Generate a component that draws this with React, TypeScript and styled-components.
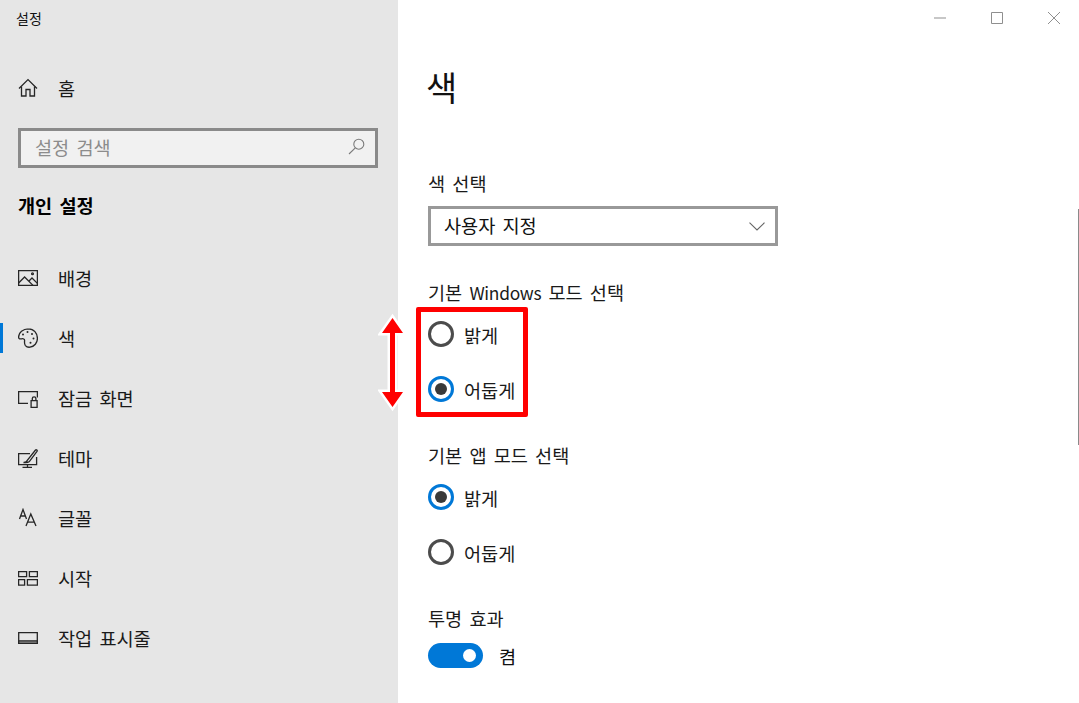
import React from "react";
import styled, { createGlobalStyle } from "styled-components";

const Global = createGlobalStyle`
  html, body { margin: 0; padding: 0; height: 100%; background: #fff; overflow: hidden; }
  body { font-family: "Noto Sans CJK KR", "Noto Sans", sans-serif; color: #111; word-spacing: 3px; }
  #root { height: 100%; }
`;

const Window = styled.div`
  position: relative;
  width: 1079px;
  height: 703px;
  display: flex;
  overflow: hidden;
  background: #fff;
`;

const Sidebar = styled.aside`
  width: 398px;
  flex: none;
  background: #e6e6e6;
  display: flex;
  flex-direction: column;
  padding: 0 20px 0 18px;
  box-sizing: border-box;
`;

const AppTitle = styled.div`
  font-size: 14px;
  line-height: 18px;
  margin: 9px 0 0 -2px;
  height: 18px;
`;

const HomeRow = styled.div`
  display: flex;
  align-items: center;
  height: 30px;
  margin-top: 46px;
  gap: 20px;
`;

const SearchBox = styled.div`
  box-sizing: border-box;
  height: 40px;
  width: 360px;
  margin-top: 25px;
  border: 3px solid #8a8a8a;
  background: #f1f1f1;
  display: flex;
  align-items: center;
  justify-content: space-between;
  padding: 0 10px 3px 14px;
  font-size: 18.6px;
  color: #8c8c8c;
`;

const SectionTitle = styled.div`
  font-size: 18.6px;
  font-weight: 700;
  line-height: 26px;
  margin-top: 24px;
  color: #000;
`;

const NavList = styled.nav`
  display: flex;
  flex-direction: column;
  margin-top: 30px;
`;

const NavItem = styled.div<{ $active?: boolean }>`
  position: relative;
  display: flex;
  align-items: center;
  height: 60px;
  gap: 20px;
  &::before {
    content: "";
    display: ${(p) => (p.$active ? "block" : "none")};
    position: absolute;
    left: -18px;
    top: 15px;
    width: 3px;
    height: 30px;
    background: #0078d7;
  }
`;

const IconSlot = styled.span`
  width: 20px;
  height: 20px;
  flex: none;
  display: block;
  svg { display: block; }
`;

const NavLabel = styled.span`
  font-size: 18.6px;
  line-height: 26px;
  color: #1a1a1a;
`;

const Main = styled.main`
  flex: 1;
  padding-left: 30px;
  display: flex;
  flex-direction: column;
`;

const PageTitle = styled.h1`
  font-size: 34px;
  font-weight: 400;
  line-height: 44px;
  margin: 65px 0 0 -2px;
  color: #111;
`;

const Label = styled.div<{ $top: number }>`
  font-size: 18.6px;
  line-height: 26px;
  margin-top: ${(p) => p.$top}px;
  color: #1a1a1a;
`;

const Latin = styled.span`
  font-size: 17.4px;
  letter-spacing: -0.3px;
`;

const Select = styled.div`
  box-sizing: border-box;
  width: 350px;
  height: 40px;
  margin-top: 10px;
  border: 3px solid #999;
  display: flex;
  align-items: center;
  justify-content: space-between;
  padding: 0 10px 0 13px;
  font-size: 18.6px;
`;

const SelectText = styled.span`
  margin-top: -3px;
`;

const RadioRow = styled.div<{ $top: number }>`
  display: flex;
  align-items: center;
  gap: 10px;
  height: 26px;
  margin-top: ${(p) => p.$top}px;
  font-size: 18.6px;
  color: #1a1a1a;
`;

const Radio = styled.span<{ $on?: boolean }>`
  box-sizing: border-box;
  width: 26px;
  height: 26px;
  border-radius: 50%;
  flex: none;
  border: 3px solid ${(p) => (p.$on ? "#0078d7" : "#4c4c4c")};
  display: flex;
  align-items: center;
  justify-content: center;
  &::after {
    content: "";
    display: ${(p) => (p.$on ? "block" : "none")};
    width: 12px;
    height: 12px;
    border-radius: 50%;
    background: #3a3a3a;
  }
`;

const ToggleRow = styled.div`
  display: flex;
  align-items: center;
  gap: 16px;
  height: 26px;
  margin-top: 11px;
  font-size: 18.6px;
`;

const Toggle = styled.span`
  box-sizing: border-box;
  width: 55px;
  height: 25px;
  border-radius: 13px;
  background: #0078d7;
  display: flex;
  align-items: center;
  justify-content: flex-end;
  padding-right: 7px;
  &::after {
    content: "";
    width: 13px;
    height: 13px;
    border-radius: 50%;
    background: #fff;
  }
`;

const Caption = styled.div`
  position: absolute;
  top: 0;
  right: 0;
  display: flex;
  gap: 7px;
`;

const CaptionButton = styled.span`
  width: 50px;
  height: 36px;
  display: flex;
  align-items: center;
  justify-content: center;
`;

const ScrollThumb = styled.div`
  position: absolute;
  left: 1078px;
  top: 209px;
  width: 1px;
  height: 236px;
  background: #8a8a8a;
`;

const Highlight = styled.div`
  position: absolute;
  left: 416px;
  top: 307px;
  width: 112px;
  height: 110px;
  box-sizing: border-box;
  border: 5px solid #ff0000;
  border-radius: 2px;
`;

const ArrowMark = styled.svg`
  position: absolute;
  left: 378px;
  top: 312px;
`;

const Icon = ({ children }: { children: React.ReactNode }) => (
  <svg width={20} height={20} viewBox="0 0 20 20" fill="none" stroke="#262626" strokeWidth="1.3">
    {children}
  </svg>
);

const items: { label: string; active?: boolean; icon: React.ReactNode }[] = [
  {
    label: "배경",
    icon: (
      <Icon>
        <path d="M.6 2.6h18.8v14.8H.6z" />
        <path d="M.6 15l6-6 8.4 8.400M11 13l3-3 5.400 5.400" />
        <circle cx="14.500" cy="5.800" r=".9" />
      </Icon>
    ),
  },
  {
    label: "색",
    active: true,
    icon: (
      <Icon>
        <path d="M10.500.8C5 .8.6 4.400.6 9c0 2 1.600 2.200 3 1.800 1.600-.4 3.200.2 3 2-.2 1.600-.4 3.200.8 4.800 1 1.200 3 1.800 4.600 1.600 4.400-.6 7.400-4.400 7.400-8.800C19.400 5 15.800.8 10.500.8z" />
        <circle cx="5" cy="6.500" r="1" fill="#262626" stroke="none" />
        <circle cx="9.500" cy="4" r="1" fill="#262626" stroke="none" />
        <circle cx="14" cy="6" r="1" fill="#262626" stroke="none" />
        <circle cx="15.500" cy="10.500" r="1" fill="#262626" stroke="none" />
        <circle cx="12.500" cy="14.800" r="1" fill="#262626" stroke="none" />
      </Icon>
    ),
  },
  {
    label: "잠금 화면",
    icon: (
      <Icon>
        <path d="M10 15.400H.6V3.600h18.800v6" />
        <path d="M13.100 12.600h6v6.800h-6zM14.300 12.600V10.600a1.800 1.800 0 013.600 0v2" />
      </Icon>
    ),
  },
  {
    label: "테마",
    icon: (
      <Icon>
        <path d="M12 5.600H.6v11h18V9" />
        <path d="M4.500 19.400h9.500M9.500 16.600v2.800" />
        <path d="M5.500 14.500c2.500.2 3.500-1 4-2.500l8-10c.8-.8 2.200.4 1.500 1.400l-7.500 10c-1.500 1.300-3.500 1.600-6 1.100z" />
      </Icon>
    ),
  },
  {
    label: "글꼴",
    icon: (
      <Icon>
        <path d="M1.500 11L5 1.500 8.500 11M2.600 8h4.800" />
        <path d="M8 18l4.800-12L18 18M9.500 14.200h7" />
      </Icon>
    ),
  },
  {
    label: "시작",
    icon: (
      <Icon>
        <path d="M.6 3.600h8v5h-8zM11.400 3.600h8v5h-8zM.6 11.600h6v5.500h-6zM9.400 11.600h10v5.500h-10z" />
      </Icon>
    ),
  },
  {
    label: "작업 표시줄",
    icon: (
      <Icon>
        <path d="M.7 4.700h18.600v10.600H.7z" />
        <path d="M.7 12.800h18.600v2.500H.7z" fill="#8a8a8a" />
      </Icon>
    ),
  },
];

export default function App() {
  return (
    <Window>
      <Global />
      <Sidebar>
        <AppTitle>설정</AppTitle>
        <HomeRow>
          <IconSlot>
            <Icon>
              <path d="M1 10.500L10 1.600l9 8.900" />
              <path d="M3.500 8.500v9.500h4.500v-6.500h4v6.500h4.500V8.500" />
            </Icon>
          </IconSlot>
          <NavLabel>홈</NavLabel>
        </HomeRow>
        <SearchBox>
          <span>설정 검색</span>
          <svg width="17" height="17" viewBox="0 0 17 17" fill="none" stroke="#7a7a7a" strokeWidth="1.100">
            <circle cx="10.800" cy="6.200" r="5" />
            <path d="M7.300 9.800L1 16" />
          </svg>
        </SearchBox>
        <SectionTitle>개인 설정</SectionTitle>
        <NavList>
          {items.map((it) => (
            <NavItem key={it.label} $active={it.active}>
              <IconSlot>{it.icon}</IconSlot>
              <NavLabel>{it.label}</NavLabel>
            </NavItem>
          ))}
        </NavList>
      </Sidebar>
      <Main>
        <PageTitle>색</PageTitle>
        <Label $top={61}>색 선택</Label>
        <Select>
          <SelectText>사용자 지정</SelectText>
          <svg width="16" height="9" viewBox="0 0 16 9" fill="none" stroke="#666" strokeWidth="1.100">
            <path d="M.5.700L8 8l7.500-7.300" />
          </svg>
        </Select>
        <Label $top={33}>
          기본 <Latin>Windows</Latin> 모드 선택
        </Label>
        <RadioRow $top={15}>
          <Radio />
          밝게
        </RadioRow>
        <RadioRow $top={29}>
          <Radio $on />
          어둡게
        </RadioRow>
        <Label $top={40}>기본 앱 모드 선택</Label>
        <RadioRow $top={16}>
          <Radio $on />
          밝게
        </RadioRow>
        <RadioRow $top={29}>
          <Radio />
          어둡게
        </RadioRow>
        <Label $top={40}>투명 효과</Label>
        <ToggleRow>
          <Toggle />켬
        </ToggleRow>
      </Main>
      <Caption>
        <CaptionButton>
          <svg width="12" height="12" viewBox="0 0 12 12" stroke="#8f8f8f" fill="none"><path d="M0 6h12" /></svg>
        </CaptionButton>
        <CaptionButton>
          <svg width="12" height="12" viewBox="0 0 12 12" stroke="#8f8f8f" fill="none"><path d="M.5.500h11v11H.500z" /></svg>
        </CaptionButton>
        <CaptionButton>
          <svg width="12" height="12" viewBox="0 0 12 12" stroke="#8f8f8f" fill="none"><path d="M0 0l12 12M12 0L0 12" /></svg>
        </CaptionButton>
      </Caption>
      <ScrollThumb />
      <Highlight />
      <ArrowMark width="30" height="102" viewBox="0 0 30 102">
        <path
          d="M14.500 6L25 21H17V80H25L14.500 95 4 80H12V21H4z"
          fill="#ff0000"
          stroke="#fff"
          strokeWidth="5"
          strokeLinejoin="miter"
          paintOrder="stroke"
        />
      </ArrowMark>
    </Window>
  );
}
